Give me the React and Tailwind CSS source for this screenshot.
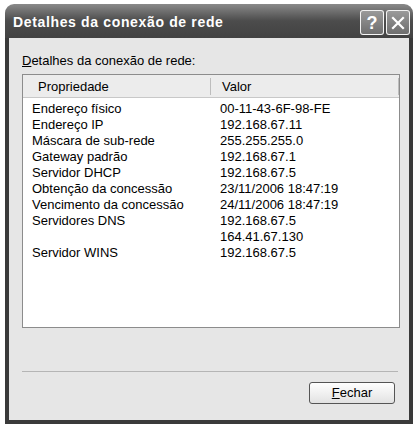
const rows = [
  ["Endereço físico", "00-11-43-6F-98-FE"],
  ["Endereço IP", "192.168.67.11"],
  ["Máscara de sub-rede", "255.255.255.0"],
  ["Gateway padrão", "192.168.67.1"],
  ["Servidor DHCP", "192.168.67.5"],
  ["Obtenção da concessão", "23/11/2006 18:47:19"],
  ["Vencimento da concessão", "24/11/2006 18:47:19"],
  ["Servidores DNS", "192.168.67.5"],
  ["", "164.41.67.130"],
  ["Servidor WINS", "192.168.67.5"],
];

function TitleButton({ children }) {
  return (
    <div className="w-[24px] h-[25px] rounded-[3px] border border-white/90 bg-gradient-to-b from-[#9a9a9a] to-[#6e6e6e] flex items-center justify-center">
      {children}
    </div>
  );
}

export default function App() {
  return (
    <div className="w-[418px] h-[427px] bg-white pl-[5px] pt-[4px] font-['Liberation_Sans',Arial,sans-serif]">
      <div className="w-[408px] h-[420px] flex flex-col">
        {/* title bar */}
        <div className="h-[34px] rounded-t-[9px] bg-gradient-to-b from-[#8a8a8a] via-[#4c4c4c] to-[#424242] flex items-center pl-[8px] pr-[3px]">
          <span className="flex-1 text-white font-bold text-[14px] tracking-[0.65px] pt-[2px]">
            Detalhes da conexão de rede
          </span>
          <div className="flex gap-[2px] mt-[3px]">
            <TitleButton>
              <span className="text-white font-bold text-[18px] leading-none">?</span>
            </TitleButton>
            <TitleButton>
              <svg width="14" height="14" viewBox="0 0 14 14">
                <path d="M2 2 L12 12 M12 2 L2 12" stroke="white" strokeWidth="2.2" strokeLinecap="square" />
              </svg>
            </TitleButton>
          </div>
        </div>

        {/* body */}
        <div className="flex-1 bg-[#e6e6e6] border-x-[4px] border-b-[4px] border-[#3a3a3a] flex flex-col px-[13px] text-[13px] text-black">
          <div className="mt-[14px] h-[18px] leading-[18px]">
            <span className="underline">D</span>etalhes da conexão de rede:
          </div>
          <div className="mt-[4px] h-[254px] w-[378px] border border-[#8c8c8c] bg-white flex flex-col">
            <div className="h-[23px] flex bg-[#ececec] border-b border-[#c8c8c8] items-center">
              <div className="w-[188px] pl-[15px] border-r border-[#bdbdbd] h-[17px] leading-[17px]">Propriedade</div>
              <div className="w-[188px] pl-[11px] border-r border-[#bdbdbd] h-[17px] leading-[17px]">Valor</div>
            </div>
            <div className="pt-[3px] flex flex-col">
              {rows.map(([k, v], i) => (
                <div key={i} className="flex h-[16px] leading-[16px]">
                  <div className="w-[188px] pl-[9px]">{k}</div>
                  <div className="pl-[9px]">{v}</div>
                </div>
              ))}
            </div>
          </div>
          <div className="mt-[43px] h-[1px] bg-[#b5b5b5] w-[376px]" />
          <div className="mt-[10px] flex justify-end pr-[1px]">
            <button className="w-[86px] h-[22px] rounded-[3px] border border-[#555] bg-gradient-to-b from-white to-[#e2e2e2] text-[13px] flex items-center justify-center">
              <span><span className="underline">F</span>echar</span>
            </button>
          </div>
        </div>
      </div>
    </div>
  );
}
